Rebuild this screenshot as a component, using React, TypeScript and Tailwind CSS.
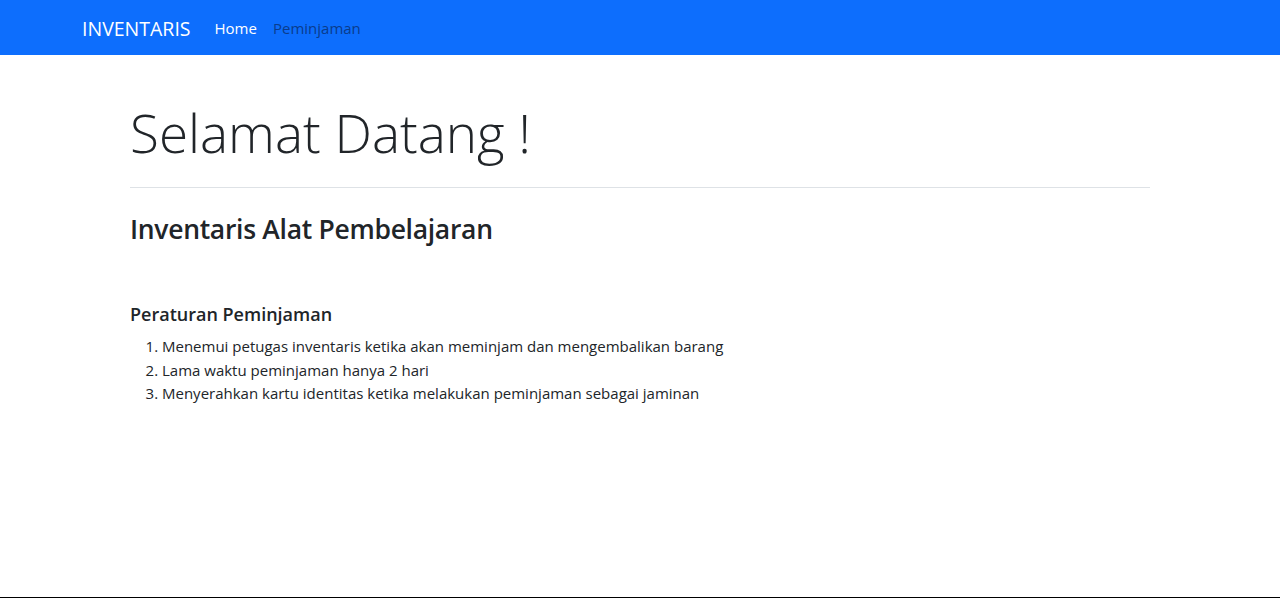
const rules = [
  'Menemui petugas inventaris ketika akan meminjam dan mengembalikan barang',
  'Lama waktu peminjaman hanya 2 hari',
  'Menyerahkan kartu identitas ketika melakukan peminjaman sebagai jaminan',
];

const App = () => {
  return (
    <div className="min-h-[598px] flex flex-col bg-white text-[#212529] font-['Open_Sans',sans-serif] border-b border-black">
      {/* Navbar */}
      <nav className="h-[55px] bg-[#0d6efd]">
        <div className="max-w-[1140px] mx-auto px-3 h-full flex items-center pt-[2px]">
          <a className="text-[19.5px] text-white mr-6">INVENTARIS</a>
          <ul className="flex items-center gap-4 text-[15px]">
            <li className="text-white">Home</li>
            <li className="text-[#0a3c8c]">Peminjaman</li>
          </ul>
        </div>
      </nav>

      {/* Content */}
      <main className="flex-1">
        <div className="max-w-[1140px] mx-auto px-3">
          <div className="px-12 pt-[46px]">
            <h1 className="text-[53px] font-light leading-[1.2]">Selamat Datang !</h1>
            <hr className="mt-[22px] border-[#dee2e6]" />
            <h2 className="mt-[26px] text-[26.5px] font-semibold tracking-[-0.3px] leading-[1.2]">
              Inventaris Alat Pembelajaran
            </h2>
            <h5 className="mt-[59px] text-[18px] font-semibold leading-[1.2]">Peraturan Peminjaman</h5>
            <ol className="mt-[9px] list-decimal pl-8 text-[15px] leading-[23.6px]">
              {rules.map((r) => (
                <li key={r}>{r}</li>
              ))}
            </ol>
          </div>
        </div>
      </main>
    </div>
  );
};

export default App;
